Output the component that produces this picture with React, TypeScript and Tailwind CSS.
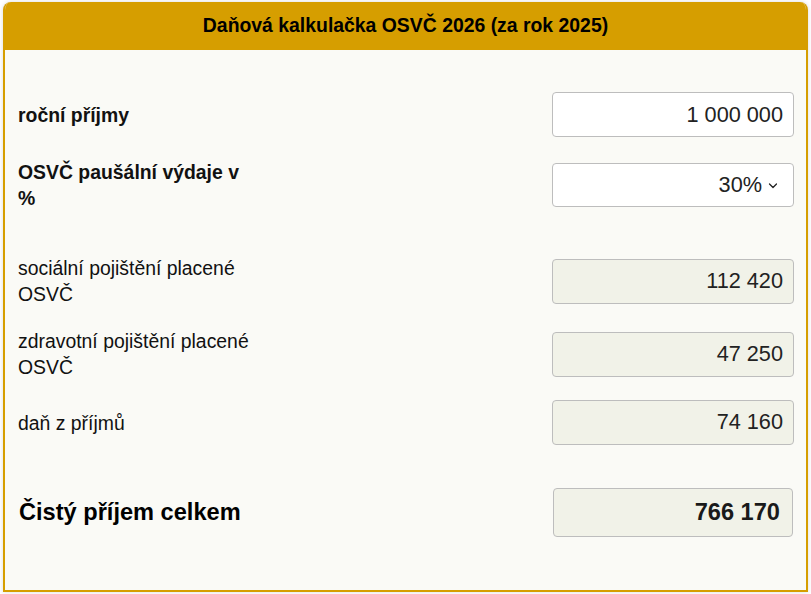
import React from "react";

const rows = [
  { label: "sociální pojištění placené OSVČ", value: "112 420", mt: "mt-[44px]" },
  { label: "zdravotní pojištění placené OSVČ", value: "47 250", mt: "mt-[21px]" },
  { label: "daň z příjmů", value: "74 160", mt: "mt-[20px]" },
];

const App: React.FC = () => {
  return (
    <div className="min-h-screen bg-white pt-[2px] px-[3px] font-['Liberation_Sans'] text-[#111]">
      <div className="rounded-t-lg border-2 border-t-0 border-[#d69e00] bg-[#fafaf6] shadow-[0_0_4px_rgba(0,0,0,0.15)] overflow-hidden">
        {/* header */}
        <div className="h-[48px] bg-[#d69e00] flex items-center justify-center">
          <h1 className="text-[19.4px] font-bold text-black">Daňová kalkulačka OSVČ 2026 (za rok 2025)</h1>
        </div>

        <div className="pl-[13px] pr-[12px] pt-[42px] pb-[53px]">
          {/* annual income */}
          <div className="flex items-center justify-between">
            <label className="w-[236px] text-[19.4px] leading-[26px] font-bold">roční příjmy</label>
            <input
              readOnly
              value="1 000 000"
              className="w-[242px] h-[45px] rounded border border-[#bdbdbd] bg-white px-[10px] text-right text-[21.7px] text-[#222] outline-none"
            />
          </div>

          {/* flat-rate expenses */}
          <div className="mt-[22px] flex items-center justify-between">
            <label className="w-[236px] text-[19.4px] leading-[26px] font-bold">OSVČ paušální výdaje v %</label>
            <div className="w-[242px] h-[44px] rounded border border-[#bdbdbd] bg-white flex items-center justify-end pr-[15px] text-[21.7px] text-[#222]">
              <span>30%</span>
              <svg width="10" height="10" viewBox="0 0 10 10" className="ml-[6px] mt-[1px]">
                <path d="M1.5 3 L5 6.5 L8.5 3" fill="none" stroke="#222" strokeWidth="1.3" strokeLinecap="round" strokeLinejoin="round" />
              </svg>
            </div>
          </div>

          {rows.map((r) => (
            <div key={r.label} className={`${r.mt} flex items-center justify-between`}>
              <label className="w-[236px] text-[19.4px] leading-[26px]">{r.label}</label>
              <div className="w-[242px] h-[45px] rounded border border-[#bdbdbd] bg-[#f1f2e8] flex items-center justify-end px-[10px] text-[21.7px] text-[#222]">
                {r.value}
              </div>
            </div>
          ))}

          {/* net income */}
          <div className="mt-[43px] flex items-center justify-between">
            <div className="w-[300px] pl-[1px] text-[23.6px] font-bold text-black">Čistý příjem celkem</div>
            <div className="mr-[1px] w-[240px] h-[49px] rounded border border-[#bdbdbd] bg-[#f1f2e8] flex items-center justify-end px-[12px] text-[23.6px] font-bold text-[#1a1a1a]">
              766 170
            </div>
          </div>
        </div>
      </div>
    </div>
  );
};

export default App;
